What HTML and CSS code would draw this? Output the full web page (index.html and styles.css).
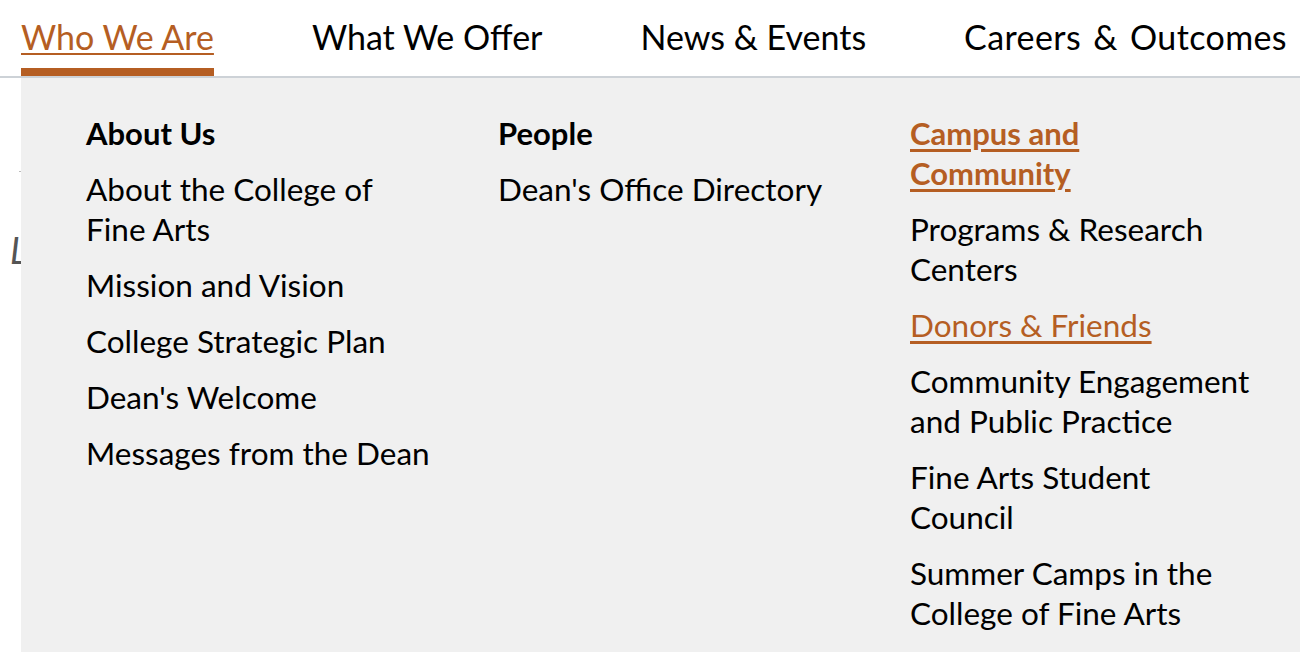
FILE: index.html
```html
<!DOCTYPE html>
<html lang="en">
<head>
    <meta charset="UTF-8">
    <meta name="viewport" content="width=device-width, initial-scale=1.0">
    <title>Who We Are - College of Fine Arts</title>
    <link rel="stylesheet" href="styles.css">
</head>
<body>
    <!-- main navigation -->
    <header class="site-nav">
        <ul class="nav-list">
            <li class="nav-item is-open">
                <a href="#" class="nav-link">Who We Are</a>

                <!-- mega menu for the open item -->
                <div class="mega-menu">
                    <div class="menu-col">
                        <h3 class="menu-heading">About Us</h3>
                        <a href="#" class="menu-link">About the College of Fine Arts</a>
                        <a href="#" class="menu-link">Mission and Vision</a>
                        <a href="#" class="menu-link">College Strategic Plan</a>
                        <a href="#" class="menu-link">Dean's Welcome</a>
                        <a href="#" class="menu-link">Messages from the Dean</a>
                    </div>
                    <div class="menu-col">
                        <h3 class="menu-heading">People</h3>
                        <a href="#" class="menu-link">Dean's Office Directory</a>
                    </div>
                    <div class="menu-col">
                        <h3 class="menu-heading"><a href="#" class="heading-link">Campus and Community</a></h3>
                        <a href="#" class="menu-link">Programs &amp; Research Centers</a>
                        <a href="#" class="menu-link is-current">Donors &amp; Friends</a>
                        <a href="#" class="menu-link">Community Engagement and Public Practice</a>
                        <a href="#" class="menu-link">Fine Arts Student Council</a>
                        <a href="#" class="menu-link">Summer Camps in the College of Fine Arts</a>
                    </div>
                </div>
            </li>
            <li class="nav-item"><a href="#" class="nav-link">What We Offer</a></li>
            <li class="nav-item"><a href="#" class="nav-link">News &amp; Events</a></li>
            <li class="nav-item"><a href="#" class="nav-link">Careers &amp; Outcomes</a></li>
        </ul>
    </header>

    <!-- page content (mostly covered by the open menu) -->
    <main class="page">
        <hr class="page-rule">
        <p class="page-lede">Learn more about the college</p>
    </main>
</body>
</html>
```

FILE: styles.css
```css
* {
    box-sizing: border-box;
    margin: 0;
    padding: 0;
}
html, body {
    height: 100%;
    overflow: hidden;
}
body {
    font-family: Lato, "Liberation Sans", Arial, sans-serif;
    color: #000;
    background: #fff;
}
a {
    color: inherit;
    text-decoration: none;
}

/* top navigation */
.site-nav {
    position: relative;
    z-index: 10;
    border-bottom: 2px solid #cdd2d7;
}
.nav-list {
    display: flex;
    list-style: none;
    padding-left: 21px;
    gap: 98px;
}
.nav-item {
    padding: 17px 0 11px;
    border-bottom: 8px solid transparent;
    font-size: 34px;
    line-height: 40px;
    white-space: nowrap;
}
.nav-item:last-child {
    word-spacing: 3px;
    letter-spacing: 0.4px;
}
.nav-item.is-open {
    border-bottom-color: #b55e23;
}
.nav-item.is-open .nav-link {
    color: #b55e23;
    text-decoration: underline;
    text-decoration-thickness: 2px;
    text-underline-offset: 3px;
}

/* dropdown panel */
.mega-menu {
    position: absolute;
    top: 78px;
    left: 21px;
    width: 1279px;
    height: 574px;
    background: #f0f0f0;
    padding: 35px 0 0 65px;
    display: grid;
    grid-template-columns: repeat(3, 412px);
    align-items: start;
    white-space: normal;
    letter-spacing: 0;
    word-spacing: 0;
}
.menu-col {
    display: flex;
    flex-direction: column;
    align-items: flex-start;
    gap: 16px;
    max-width: 347px;
}
.menu-heading {
    max-width: 300px;
    font-size: 31px;
    line-height: 40px;
    font-weight: 700;
}
.heading-link {
    color: #b55e23;
    text-decoration: underline;
    text-decoration-thickness: 3px;
    text-underline-offset: 4px;
}
.menu-link {
    font-size: 31.5px;
    line-height: 40px;
}
.menu-link.is-current {
    color: #b55e23;
    text-decoration: underline;
    text-decoration-thickness: 3px;
    text-underline-offset: 4px;
}

/* content behind the menu */
.page {
    padding: 93px 0 0 10px;
}
.page-rule {
    margin-left: 9px;
    border: none;
    border-top: 1px solid #bbb;
}
.page-lede {
    margin-top: 56px;
    font-size: 36px;
    font-style: italic;
    color: #555;
}
```
